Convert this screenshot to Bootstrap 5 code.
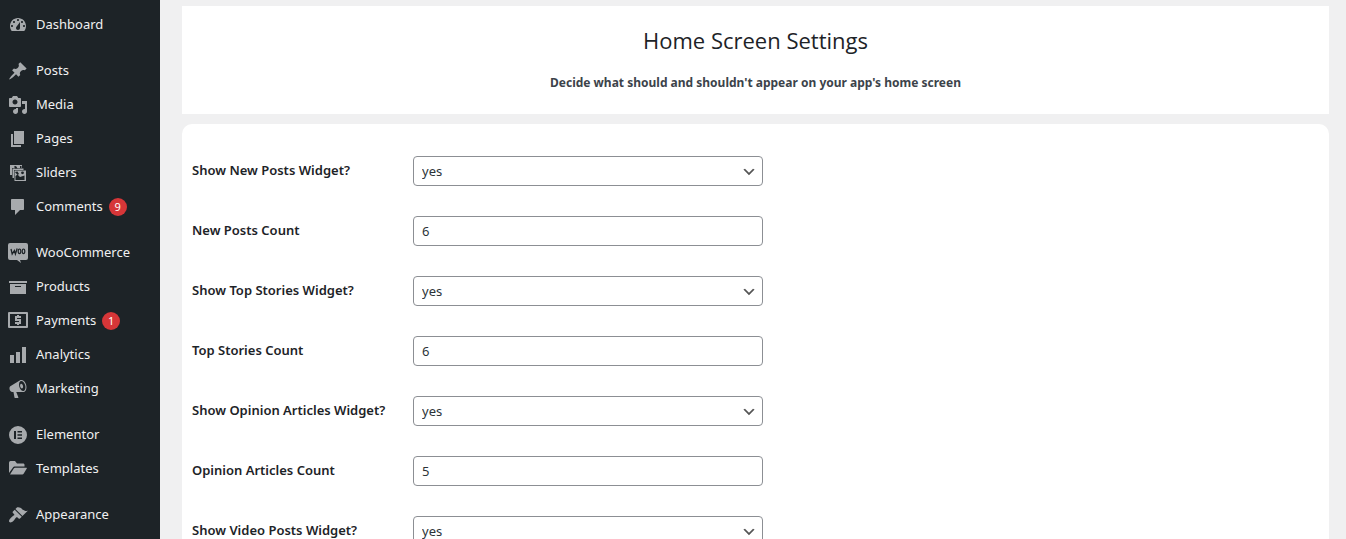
<!DOCTYPE html>
<html lang="en">
<head>
<meta charset="utf-8">
<meta name="viewport" content="width=device-width, initial-scale=1">
<title>Home Screen Settings</title>
<link href="https://cdn.jsdelivr.net/npm/bootstrap@5.3.0/dist/css/bootstrap.min.css" rel="stylesheet">
<style>
  body { background: #f0f0f1; color: #3c434a; font-family: "Noto Sans", "Open Sans", sans-serif; font-size: 13px; }
  .admin-menu { width: 160px; background: #1d2327; padding-top: 8px; }
  .admin-menu ul + ul { margin-top: 12px; }
  .admin-menu a { height: 34px; padding: 0 8px; gap: 8px; color: #f0f0f1; font-size: 13px; }
  .admin-menu a:hover { color: #72aee6; }
  .admin-menu svg { width: 20px; height: 20px; fill: #a7aaad; fill-rule: evenodd; }
  .count { width: 18px; height: 18px; margin-left: -2px; background: #d63638; color: #fff; font-size: 11px; line-height: 18px; }
  .admin-main { padding: 6px 17px 0 22px; }
  .page-head { padding: 19px 10px 21px; }
  .page-head h1 { color: #1d2327; font-family: "Open Sans", sans-serif; font-size: 22px; line-height: 30px; margin-bottom: 17px; }
  .page-head p { font-size: 12px; line-height: 21px; }
  .settings { margin-top: 10px; padding: 32px 10px; border-radius: 10px; }
  .setting-row { margin-bottom: 30px; }
  .setting-row label { width: 221px; color: #1d2327; font-size: 13px; line-height: 28px; font-weight: 600; }
  .field { width: 350px; height: 30px; padding: 0 8px; border: 1px solid #8c8f94; border-radius: 4px; color: #2c3338; font-size: 13px; line-height: 28px; appearance: textfield; }
  .form-select.field { appearance: none; background-position: right 5px top 7px; background-size: 16px 16px;
    background-image: url("data:image/svg+xml,%3Csvg xmlns='http://www.w3.org/2000/svg' viewBox='0 0 20 20'%3E%3Cpath d='M5 6l5 5 5-5 2 1-7 7-7-7 2-1z' fill='%23555'/%3E%3C/svg%3E"); }
</style>
</head>
<body>
<div class="d-flex min-vh-100">
  <nav class="admin-menu flex-shrink-0" aria-label="Main menu">
    <ul class="list-unstyled mb-0">
      <li><a href="#" class="d-flex align-items-center text-decoration-none"><svg viewBox="0 0 20 20" aria-hidden="true"><path d="M3.76 16h12.48c1.1-1.37 1.76-3.11 1.76-5 0-4.42-3.58-8-8-8s-8 3.58-8 8c0 1.89.66 3.63 1.76 5zM10 4c.55 0 1 .45 1 1s-.45 1-1 1-1-.45-1-1 .45-1 1-1zM6 6c.55 0 1 .45 1 1s-.45 1-1 1-1-.45-1-1 .45-1 1-1zm8 0c.55 0 1 .45 1 1s-.45 1-1 1-1-.45-1-1 .45-1 1-1zm-5.37 5.55L12 7v6c0 1.1-.9 2-2 2s-2-.9-2-2c0-.57.24-1.08.63-1.45zM4 10c.55 0 1 .45 1 1s-.45 1-1 1-1-.45-1-1 .45-1 1-1zm12 0c.55 0 1 .45 1 1s-.45 1-1 1-1-.45-1-1 .45-1 1-1z"/></svg><span>Dashboard</span></a></li>
    </ul>
    <ul class="list-unstyled mb-0">
      <li><a href="#" class="d-flex align-items-center text-decoration-none"><svg viewBox="0 0 20 20" aria-hidden="true"><path d="M10.44 3.02l1.82-1.82 6.36 6.35-1.83 1.82c-1.05-.68-2.48-.57-3.41.36l-.75.75c-.92.93-1.04 2.35-.35 3.41l-1.83 1.82-2.41-2.41-2.8 2.79c-.42.42-3.38 2.71-3.8 2.29s1.86-3.39 2.28-3.81l2.79-2.79L4.1 9.36l1.83-1.82c1.05.69 2.48.57 3.4-.36l.75-.75c.93-.92 1.05-2.35.36-3.41z"/></svg><span>Posts</span></a></li>
      <li><a href="#" class="d-flex align-items-center text-decoration-none"><svg viewBox="0 0 20 20" aria-hidden="true"><path d="M13 11V4c0-.55-.45-1-1-1h-1.67L9 1H5L3.67 3H2c-.55 0-1 .45-1 1v7c0 .55.45 1 1 1h10c.55 0 1-.45 1-1zM7 4.5c1.38 0 2.5 1.12 2.5 2.5S8.38 9.5 7 9.5 4.5 8.38 4.5 7 5.62 4.5 7 4.5zM14 6h5v10.5c0 1.38-1.12 2.5-2.5 2.5S14 17.88 14 16.5s1.12-2.5 2.5-2.5c.17 0 .34.02.5.05V9h-3V6zM10 13v3.5c0 1.38-1.12 2.5-2.5 2.5S5 17.88 5 16.5 6.12 14 7.5 14c.17 0 .34.02.5.05V13h2z"/></svg><span>Media</span></a></li>
      <li><a href="#" class="d-flex align-items-center text-decoration-none"><svg viewBox="0 0 20 20" aria-hidden="true"><path d="M6 15V2h10v13H6zm-1 1h8v2H3V5h2v11z"/></svg><span>Pages</span></a></li>
      <li><a href="#" class="d-flex align-items-center text-decoration-none"><svg viewBox="0 0 20 20" aria-hidden="true"><path d="M2 2h12v3H4v7H2z"/><path d="M4.500 5.500h11V7H6v8H4.500z"/><path d="M6.500 7.500H18V18H6.500z"/><path d="M7.500 17v-4l2-1.500 2.500 2.500 4.500-1.500v4.500z" fill="#1d2327"/><path d="M7 9l2.500-.5L11 11l-1.500 1z" fill="#1d2327"/><circle cx="14.500" cy="9.800" r="1.400" fill="#1d2327"/><path d="M6 3.500l2-.5 1.500 2.500H7zM12 3h1.500v2H12z" fill="#1d2327"/></svg><span>Sliders</span></a></li>
      <li><a href="#" class="d-flex align-items-center text-decoration-none"><svg viewBox="0 0 20 20" aria-hidden="true"><path d="M4 2h11c.55 0 1 .45 1 1v9c0 .55-.45 1-1 1h-3l-5 5v-5H4c-.55 0-1-.45-1-1V3c0-.55.45-1 1-1z"/></svg><span>Comments</span><span class="count rounded-circle text-center">9</span></a></li>
    </ul>
    <ul class="list-unstyled mb-0">
      <li><a href="#" class="d-flex align-items-center text-decoration-none"><svg viewBox="0 0 20 20" aria-hidden="true"><path d="M2 0h16a2 2 0 0 1 2 2v13a2 2 0 0 1-2 2h-6l1 3-4-3H2a2 2 0 0 1-2-2V2a2 2 0 0 1 2-2z"/><path d="M3 6l1.200 5L6.400 7.500l1 3.500L9.200 5.500" fill="none" stroke="#1d2327" stroke-width="1.300"/><ellipse cx="11.500" cy="8.300" rx="1.300" ry="2.300" fill="none" stroke="#1d2327" stroke-width="1.200"/><ellipse cx="15.500" cy="8.300" rx="1.300" ry="2.300" fill="none" stroke="#1d2327" stroke-width="1.200"/></svg><span>WooCommerce</span></a></li>
      <li><a href="#" class="d-flex align-items-center text-decoration-none"><svg viewBox="0 0 20 20" aria-hidden="true"><path d="M19 4v2H1V4h18zM2 7h16v10H2V7zm11 3V9H7v1h6z"/></svg><span>Products</span></a></li>
      <li><a href="#" class="d-flex align-items-center text-decoration-none"><svg viewBox="0 0 20 20" aria-hidden="true"><path d="M1 1h18a1 1 0 0 1 1 1v14a1 1 0 0 1-1 1H1a1 1 0 0 1-1-1V2a1 1 0 0 1 1-1zm1 2v12h16V3z"/><path d="M13 6H8v3h4v3H7M10 4v2M10 12v2" fill="none" stroke="#a7aaad" stroke-width="2"/></svg><span>Payments</span><span class="count rounded-circle text-center">1</span></a></li>
      <li><a href="#" class="d-flex align-items-center text-decoration-none"><svg viewBox="0 0 20 20" aria-hidden="true"><path d="M18 18V2h-4v16h4zm-6 0V7H8v11h4zm-6 0v-8H2v8h4z"/></svg><span>Analytics</span></a></li>
      <li><a href="#" class="d-flex align-items-center text-decoration-none"><svg viewBox="0 0 20 20" aria-hidden="true"><path d="M18.150 5.940c.46 1.620.38 3.220-.02 4.480-.42 1.280-1.260 2.180-2.300 2.480-.16.06-.26.06-.4.06-.06.02-.12.02-.18.02-.06.02-.14.02-.22.02h-6.800l2.220 5.500c.02.14-.06.26-.14.34-.08.1-.24.16-.34.16H6.950c-.1 0-.26-.06-.34-.16-.08-.08-.16-.2-.14-.34l-1-5.500H4.250l-.02-.02c-.5.06-1.080-.18-1.540-.62s-.88-1.080-1.060-1.880c-.24-.8-.2-1.560-.02-2.200.18-.62.58-1.080 1.060-1.300l.02-.02 9-5.400c.1-.06.18-.1.24-.16.06-.04.14-.08.24-.12.16-.08.28-.12.5-.18 1.040-.3 2.240.1 3.220.98s1.840 2.240 2.260 3.860zm-2.580 5.980h-.02c.4-.1.74-.34 1.040-.7.58-.7.86-1.760.86-3.040 0-.64-.1-1.300-.28-1.980-.34-1.360-1.020-2.500-1.780-3.240s-1.680-1.100-2.460-.88c-.82.22-1.400.96-1.700 2-.32 1.040-.28 2.360.06 3.720.38 1.360 1 2.500 1.800 3.240.78.74 1.620 1.100 2.480.88zm-2.540-7.080c.22-.04.42-.02.62.04.38.16.76.48 1.020 1s.42 1.200.42 1.780c0 .3-.04.56-.12.8-.18.48-.44.84-.86.94-.34.1-.8-.06-1.140-.4s-.64-.86-.78-1.500c-.18-.62-.12-1.240.02-1.720s.48-.84.82-.94z"/></svg><span>Marketing</span></a></li>
    </ul>
    <ul class="list-unstyled mb-0">
      <li><a href="#" class="d-flex align-items-center text-decoration-none"><svg viewBox="0 0 20 20" aria-hidden="true"><path d="M10 1a9 9 0 1 0 0 18 9 9 0 0 0 0-18zM6 6h2v8H6zm3.500 0H14v1.600H9.500zm0 3.200H14v1.600H9.500zm0 3.200H14V14H9.500z"/></svg><span>Elementor</span></a></li>
      <li><a href="#" class="d-flex align-items-center text-decoration-none"><svg viewBox="0 0 20 20" aria-hidden="true"><path d="M1 14V4c0-1.100.7-2 1.500-2H7l2 2.500h6c1 0 1.500.5 1.500 1.500v1.500H7c-1 0-1.500.3-2 1z"/><path d="M2 15.500l3.800-6c.3-.5.7-.8 1.300-.8H18.500c.4 0 .5.3.3.7l-3.200 5.300c-.3.5-.7.800-1.300.800z"/></svg><span>Templates</span></a></li>
    </ul>
    <ul class="list-unstyled mb-0">
      <li><a href="#" class="d-flex align-items-center text-decoration-none"><svg viewBox="0 0 20 20" aria-hidden="true"><path d="M14.480 11.060L7.410 3.990l1.500-1.500c.5-.56 2.300-.47 3.510.32 1.210.8 1.430 1.280 2.910 2.100 1.180.64 2.450 1.260 4.450.85zm-.71.71L6.700 4.700 4.930 6.470c-.39.39-.39 1.020 0 1.410l1.060 1.060c.39.39.39 1.030 0 1.420-.6.6-1.430 1.110-2.210 1.690-.35.26-.7.53-1.010.84C1.430 14.230.4 16.080 1.400 17.070c.99 1 2.840-.03 4.180-1.360.31-.31.58-.66.85-1.020.57-.78 1.080-1.610 1.690-2.210.39-.39 1.020-.39 1.410 0l1.060 1.060c.39.39 1.020.39 1.410 0z"/></svg><span>Appearance</span></a></li>
    </ul>
  </nav>
  <main class="admin-main flex-grow-1">
    <header class="page-head bg-white text-center">
      <h1 class="fw-normal">Home Screen Settings</h1>
      <p class="fw-bold mb-0">Decide what should and shouldn't appear on your app's home screen</p>
    </header>
    <form class="settings bg-white">
      <div class="setting-row d-flex"><label for="new-show">Show New Posts Widget?</label><select id="new-show" class="form-select field"><option>yes</option><option>no</option></select></div>
      <div class="setting-row d-flex"><label for="new-count">New Posts Count</label><input id="new-count" type="number" class="form-control field" value="6"></div>
      <div class="setting-row d-flex"><label for="top-show">Show Top Stories Widget?</label><select id="top-show" class="form-select field"><option>yes</option><option>no</option></select></div>
      <div class="setting-row d-flex"><label for="top-count">Top Stories Count</label><input id="top-count" type="number" class="form-control field" value="6"></div>
      <div class="setting-row d-flex"><label for="opinion-show">Show Opinion Articles Widget?</label><select id="opinion-show" class="form-select field"><option>yes</option><option>no</option></select></div>
      <div class="setting-row d-flex"><label for="opinion-count">Opinion Articles Count</label><input id="opinion-count" type="number" class="form-control field" value="5"></div>
      <div class="setting-row d-flex"><label for="video-show">Show Video Posts Widget?</label><select id="video-show" class="form-select field"><option>yes</option><option>no</option></select></div>
    </form>
  </main>
</div>
<script src="https://cdn.jsdelivr.net/npm/bootstrap@5.3.0/dist/js/bootstrap.bundle.min.js"></script>
</body>
</html>
